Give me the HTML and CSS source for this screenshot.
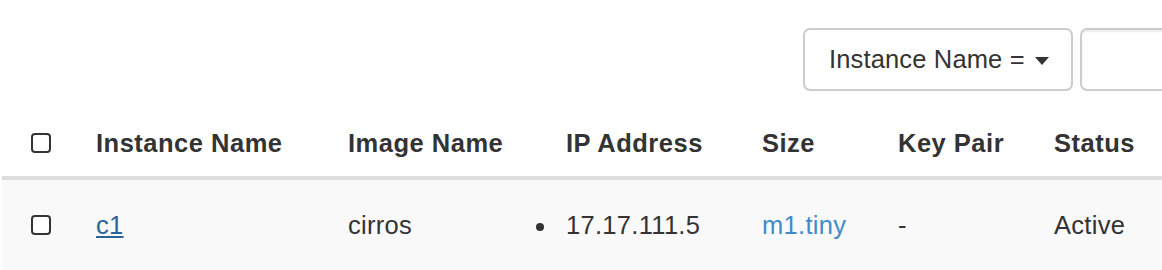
FILE: index.html
```html
<!DOCTYPE html>
<html>
<head>
<meta charset="utf-8">
<link rel="stylesheet" href="styles.css">
</head>
<body>
<div class="toolbar">
  <button class="filter-btn">Instance Name = <span class="caret"></span></button>
  <input class="search" type="text">
</div>
<table class="table">
  <colgroup>
    <col class="c-check"><col class="c-name"><col class="c-image"><col class="c-ip"><col class="c-size"><col class="c-key"><col class="c-status">
  </colgroup>
  <thead>
    <tr>
      <th><span class="checkbox"></span></th>
      <th>Instance Name</th>
      <th>Image Name</th>
      <th>IP Address</th>
      <th>Size</th>
      <th>Key Pair</th>
      <th>Status</th>
    </tr>
  </thead>
  <tbody>
    <tr>
      <td><span class="checkbox"></span></td>
      <td><a class="link-dark" href="#">c1</a></td>
      <td>cirros</td>
      <td><ul class="ips"><li>17.17.111.5</li></ul></td>
      <td><a class="link" href="#">m1.tiny</a></td>
      <td>-</td>
      <td>Active</td>
    </tr>
  </tbody>
</table>
</body>
</html>
```

FILE: styles.css
```css
html, body {
  margin: 0;
  padding: 0;
  overflow: hidden;
  background: #fff;
}
body {
  font-family: "Liberation Sans", Arial, Helvetica, sans-serif;
  font-size: 25.5px;
  color: #333;
  width: 1162px;
  height: 270px;
}
.toolbar {
  display: flex;
  align-items: flex-start;
  gap: 7px;
  padding: 28px 0 0 803px;
  height: 82px;
  white-space: nowrap;
  overflow: hidden;
}
.filter-btn {
  box-sizing: border-box;
  width: 270px;
  height: 63px;
  border: 2px solid #ccc;
  border-radius: 7px;
  background: #fff;
  font-family: inherit;
  font-size: 25.5px;
  letter-spacing: 0.15px;
  color: #333;
  padding: 0 0 0 24px;
  display: flex;
  align-items: center;
  flex-shrink: 0;
}
.caret {
  display: inline-block;
  width: 0;
  height: 0;
  margin-left: 10px;
  margin-top: 2px;
  border-left: 7px solid transparent;
  border-right: 7px solid transparent;
  border-top: 8px solid #333;
}
.search {
  box-sizing: border-box;
  width: 200px;
  height: 63px;
  border: 2px solid #ccc;
  border-radius: 7px;
  box-shadow: inset 0 2px 2px rgba(0,0,0,0.075);
  flex-shrink: 0;
  padding: 0;
  margin: 0;
}
.table {
  border-collapse: collapse;
  table-layout: fixed;
  width: 1160px;
  margin-left: 2px;
}
.c-check { width: 78px; }
.c-name { width: 252px; }
.c-image { width: 218px; }
.c-ip { width: 196px; }
.c-size { width: 136px; }
.c-key { width: 156px; }
.c-status { width: 124px; }
.table th, .table td {
  text-align: left;
  line-height: 34px;
  padding: 16px 0 16px 16px;
  vertical-align: middle;
  white-space: nowrap;
}
.table th:first-child, .table td:first-child {
  padding-left: 29px;
}
.table th {
  font-weight: bold;
  letter-spacing: 0.5px;
  border-bottom: 4px solid #ddd;
}
.table td {
  padding-top: 28px;
  padding-bottom: 28px;
  background: #f9f9f9;
  letter-spacing: 0.3px;
}
.checkbox {
  display: block;
  box-sizing: border-box;
  width: 20px;
  height: 20px;
  border: 2px solid #333;
  border-radius: 4px;
  background: #fff;
}
.link-dark {
  color: #2a6496;
  text-decoration: underline;
}
.link {
  color: #428bca;
  text-decoration: none;
}
.ips {
  margin: 0;
  padding: 0;
  list-style: none;
}
.ips li::before {
  content: "";
  display: inline-block;
  width: 8px;
  height: 8px;
  border-radius: 50%;
  background: #333;
  margin-left: -30px;
  margin-right: 22px;
  vertical-align: middle;
}
```
